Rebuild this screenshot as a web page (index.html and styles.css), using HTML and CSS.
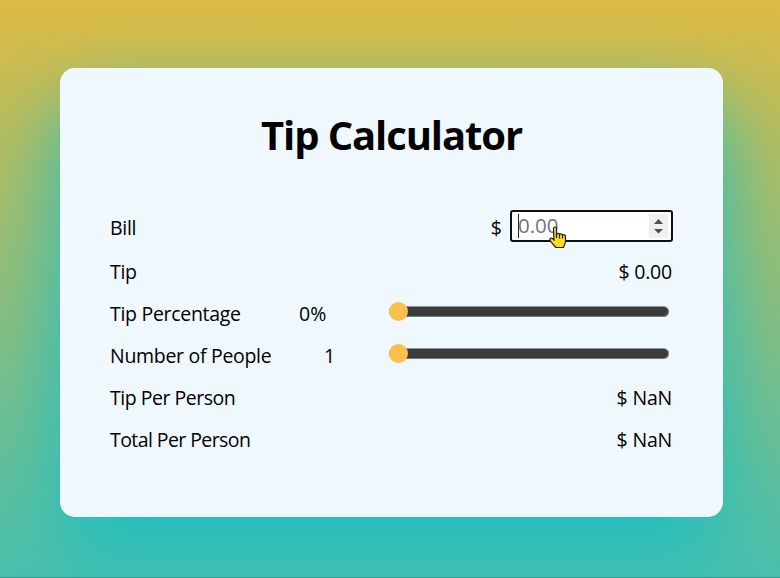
FILE: index.html
```html
<!DOCTYPE html>
<html lang="en">
<head>
<meta charset="utf-8">
<title>Tip Calculator</title>
<link rel="stylesheet" href="styles.css">
</head>
<body>
<main class="card">
  <h1 class="title">Tip Calculator</h1>
  <div class="row row-bill">
    <label class="label" for="bill">Bill</label>
    <div class="bill-entry">
      <span class="dollar">$</span>
      <div class="field">
        <span class="caret"></span>
        <input class="bill-input" id="bill" type="text" placeholder="0.00">
        <svg class="spinner" width="19" height="24" viewBox="0 0 19 24"><path d="M5 10l4.500-5 4.500 5zM5 15h9l-4.500 4.500z"/></svg>
        <svg class="pointer" width="18" height="23" viewBox="0 0 18 23"><path d="M4.500 2.500C4.500.5 7.500.5 7.500 2.500V8C8.500 7 10.300 7.300 10.500 8.500C11.500 7.500 13.300 8 13.500 9C14.500 8.300 16.500 8.800 16.500 10.500V16L14.500 21.500H6.800L1.200 14.800C.3 13 1.500 11.500 3 12.300L5 14Z"/><path class="creases" d="M7.500 8v4M10.500 8.500v4M13.500 9v3.500"/></svg>
      </div>
    </div>
  </div>
  <div class="row"><span class="label">Tip</span><span class="value">$ 0.00</span></div>
  <div class="row">
    <label class="label" for="percent">Tip Percentage</label>
    <output class="amount">0%</output>
    <input class="slider" id="percent" type="range" min="0" max="100" value="0">
  </div>
  <div class="row">
    <label class="label" for="people">Number of People</label>
    <output class="amount amount-people">1</output>
    <input class="slider" id="people" type="range" min="1" max="10" value="1">
  </div>
  <div class="row"><span class="label per-person">Tip Per Person</span><span class="value">$ NaN</span></div>
  <div class="row"><span class="label total">Total Per Person</span><span class="value">$ NaN</span></div>
</main>
</body>
</html>
```
FILE: styles.css
```css
* { box-sizing: border-box; }
html { height: 100%; }
body {
  margin: 0;
  height: 578px;
  overflow: hidden;
  padding: 68px 57px 0 60px;
  border-bottom: 1px solid #319c91;
  background: linear-gradient(#ddbb44, #4abfac);
  font-family: "Segoe UI", "Open Sans", "Noto Sans", sans-serif;
  color: #000;
}
.card {
  height: 448.5px;
  padding: 37px 50px 0;
  border-radius: 15px;
  background: #f0f8ff;
  box-shadow: 0 40px 80px #20bfc3;
}
.title {
  margin: 0 0 42px;
  height: 60px;
  text-align: center;
  font-size: 40px;
  line-height: 60px;
  letter-spacing: -1.1px;
}
.row {
  display: flex;
  align-items: center;
  height: 42px;
  font-size: 19.5px;
  line-height: 42px;
  white-space: nowrap;
}
.row-bill { height: 44px; padding-bottom: 2px; }
.label { width: 189px; letter-spacing: -0.3px; }
.per-person { letter-spacing: -0.48px; }
.total { letter-spacing: -0.58px; }
.value { margin-left: auto; padding-right: 1px; letter-spacing: -0.2px; }
.bill-entry { display: flex; align-items: center; margin-left: auto; }
.dollar { margin-right: 8px; }
.field {
  position: relative;
  display: flex;
  align-items: center;
  width: 163px;
  height: 32px;
  margin-top: -5px;
  padding: 0 3px 0 6px;
  border: 2px solid #101010;
  border-radius: 3px;
  background: #fff;
}
.caret { width: 1px; height: 24px; margin-right: -1px; background: #222; }
.bill-input {
  flex: 1;
  min-width: 0;
  height: 28px;
  padding: 0 0 2px;
  border: 0;
  outline: 0;
  background: transparent;
  font: 20.5px "Segoe UI", "Open Sans", "Noto Sans", sans-serif;
}
.bill-input::placeholder { color: #757575; opacity: 1; }
.spinner { background: #efefef; fill: #505050; }
.pointer {
  position: absolute;
  left: 37px;
  top: 14px;
  fill: #fbdc20;
  stroke: #211d12;
  stroke-width: 1.2;
}
.creases { fill: none; }
.amount { width: 90px; }
.amount-people { padding-left: 25px; }
.slider {
  appearance: none;
  width: 280px;
  height: 11px;
  margin: -5px 0 0;
  border: 1px solid #777;
  border-top-color: #929498;
  border-radius: 6px;
  background: #3b3b3b;
}
.slider::-webkit-slider-thumb {
  appearance: none;
  width: 19px;
  height: 19px;
  margin-left: -1px;
  border-radius: 50%;
  background: #f9c04d;
}
```
